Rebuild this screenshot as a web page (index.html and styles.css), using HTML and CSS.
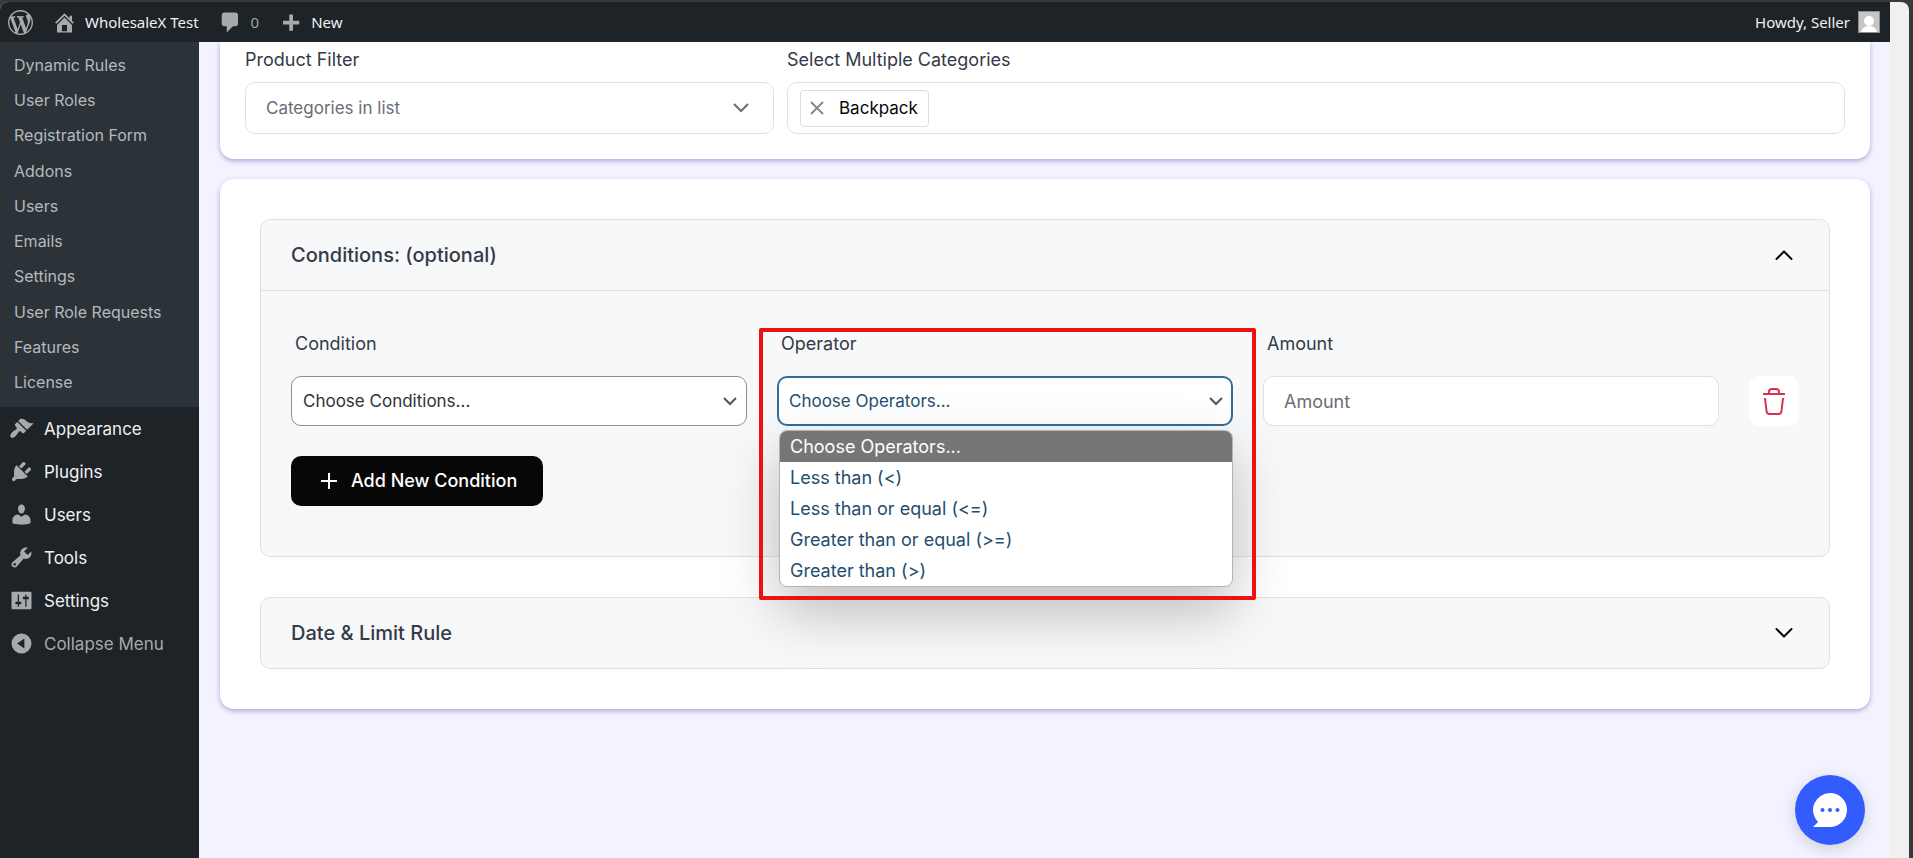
FILE: index.html
```html
<!DOCTYPE html>
<html lang="en">
<head>
    <meta charset="UTF-8">
    <meta name="viewport" content="width=device-width, initial-scale=1.0">
    <title>Dynamic Rules - WholesaleX Test</title>
    <link rel="stylesheet" href="styles.css">
</head>
<body>

<div class="window">
    <div class="page">

        <header class="admin-bar">
            <a class="bar-item" href="#" aria-label="About WordPress">
                <svg class="icon" viewBox="0 0 20 20"><path d="M20 10c0-5.51-4.49-10-10-10C4.48 0 0 4.49 0 10c0 5.52 4.48 10 10 10 5.51 0 10-4.48 10-10zM7.78 15.37L4.37 6.22c.55-.02 1.17-.08 1.17-.08.5-.06.44-1.13-.06-1.11 0 0-1.45.11-2.37.11-.18 0-.37 0-.58-.01C4.12 2.69 6.87 1.11 10 1.11c2.33 0 4.45.87 6.05 2.34-.68-.11-1.65.39-1.65 1.58 0 .74.45 1.36.9 2.1.35.61.55 1.36.55 2.46 0 1.49-1.4 5-1.4 5l-3.03-8.37c.54-.02.82-.17.82-.17.5-.05.44-1.25-.06-1.22 0 0-1.44.12-2.38.12-.87 0-2.33-.12-2.33-.12-.5-.03-.56 1.2-.06 1.22l.92.08 1.26 3.41zM17.41 10c.24-.64.74-1.87.43-4.25.7 1.29 1.05 2.71 1.05 4.25 0 3.29-1.73 6.24-4.4 7.78.97-2.59 1.94-5.2 2.92-7.78zM6.1 18.09C3.12 16.65 1.11 13.53 1.11 10c0-1.3.23-2.48.72-3.59C3.25 10.3 4.67 14.2 6.1 18.09zm4.03-6.63l2.58 6.98c-.86.29-1.76.45-2.71.45-.79 0-1.57-.11-2.29-.33.81-2.38 1.62-4.74 2.42-7.1z"/></svg>
            </a>
            <a class="bar-item" href="#">
                <svg class="icon" viewBox="0 0 20 20"><path fill-rule="evenodd" d="M16 8.5l1.53 1.53-1.06 1.06L10 4.6l-6.47 6.49-1.06-1.06L10 2.5l4 4v-2h2v4zm-6-2.46l6 5.99V18H4v-5.97zM12 17v-5H8v5h4z"/></svg>
                <span>WholesaleX Test</span>
            </a>
            <a class="bar-item muted" href="#">
                <svg class="icon" viewBox="0 0 20 20"><path d="M5 2h9c1.1 0 2 .9 2 2v7c0 1.1-.9 2-2 2h-2l-5 5v-5H5c-1.1 0-2-.9-2-2V4c0-1.1.9-2 2-2z"/></svg>
                <span>0</span>
            </a>
            <a class="bar-item" href="#">
                <svg class="icon" viewBox="0 0 20 20"><path d="M17 8.500v3h-5v5H9v-5H4v-3h5v-5h3v5h5z"/></svg>
                <span>New</span>
            </a>
            <a class="bar-item account" href="#">
                <span>Howdy, Seller</span>
                <svg class="avatar" viewBox="0 0 22 22"><rect width="22" height="22" fill="#c5c5c5"/><circle cx="11" cy="10" r="5" fill="#fff"/><path d="M3 21c1-4 4-6 8-6s7 2 8 6z" fill="#fff"/><rect x="0.500" y="0.500" width="21" height="21" fill="none" stroke="#8c8f94"/></svg>
            </a>
        </header>

        <div class="layout">
            <nav class="sidebar">
                <div class="submenu">
                    <a href="#">Dynamic Rules</a>
                    <a href="#">User Roles</a>
                    <a href="#">Registration Form</a>
                    <a href="#">Addons</a>
                    <a href="#">Users</a>
                    <a href="#">Emails</a>
                    <a href="#">Settings</a>
                    <a href="#">User Role Requests</a>
                    <a href="#">Features</a>
                    <a href="#">License</a>
                </div>
                <a class="menu-item" href="#">
                    <svg class="icon" viewBox="0 0 20 20"><path d="M14.48 11.06L7.41 3.99l1.5-1.5c.5-.56 2.3-.47 3.51.32 1.21.8 1.43 1.28 2.91 2.1 1.18.64 2.45 1.26 4.45.85zm-.71.71L6.7 4.7 4.93 6.47c-.39.39-.39 1.02 0 1.41l1.06 1.06c.39.39.39 1.03 0 1.42-.6.6-1.43 1.11-2.21 1.69-.35.26-.7.53-1.01.84C1.43 14.23.4 16.08 1.4 17.07c.99 1 2.84-.03 4.18-1.36.31-.31.58-.66.85-1.02.57-.78 1.08-1.61 1.69-2.21.39-.39 1.02-.39 1.41 0l1.06 1.06c.39.39 1.02.39 1.41 0z"/></svg>
                    Appearance
                </a>
                <a class="menu-item" href="#">
                    <svg class="icon" viewBox="0 0 20 20"><path d="M13.11 4.36L9.87 7.6 8 5.73l3.24-3.24c.35-.34 1.05-.2 1.56.32.52.51.66 1.21.31 1.55zm-8 1.77l.91-1.12 9.01 9.01-1.19.84c-.71.71-2.63 1.16-3.82 1.16H6.14L4.9 17.26c-.59.59-1.54.59-2.12 0-.59-.58-.59-1.53 0-2.12l1.24-1.24v-3.88c0-1.13.4-3.19 1.09-3.89zm7.26 3.97l3.24-3.24c.34-.35 1.04-.21 1.55.31.52.51.66 1.21.31 1.55l-3.24 3.25z"/></svg>
                    Plugins
                </a>
                <a class="menu-item" href="#">
                    <svg class="icon" viewBox="0 0 20 20"><path d="M10 9.25c-2.27 0-2.73-3.44-2.73-3.44C7 4.02 7.82 2 9.97 2c2.16 0 2.98 2.02 2.71 3.81 0 0-.41 3.44-2.68 3.44zm0 2.57L12.72 10c2.39 0 4.52 2.33 4.52 4.53v2.49s-3.65 1.13-7.24 1.13c-3.65 0-7.24-1.13-7.24-1.13v-2.49c0-2.25 1.94-4.48 4.47-4.48z"/></svg>
                    Users
                </a>
                <a class="menu-item" href="#">
                    <svg class="icon" viewBox="0 0 20 20"><path d="M16.68 9.77c-1.34 1.34-3.3 1.67-4.95.99l-5.41 6.52c-.99.99-2.59.99-3.58 0s-.99-2.59 0-3.57l6.52-5.42c-.68-1.65-.35-3.61.99-4.95 1.28-1.28 3.12-1.62 4.72-1.06l-2.89 2.89 2.82 2.82 2.86-2.87c.53 1.58.18 3.39-1.08 4.65zM3.81 16.21c.4.39 1.04.39 1.43 0 .4-.4.4-1.04 0-1.43-.39-.4-1.03-.4-1.43 0-.39.39-.39 1.03 0 1.43z"/></svg>
                    Tools
                </a>
                <a class="menu-item" href="#">
                    <svg class="icon" viewBox="0 0 20 20"><path fill-rule="evenodd" d="M18 16V4c0-.55-.45-1-1-1H3c-.55 0-1 .45-1 1v12c0 .55.45 1 1 1h14c.55 0 1-.45 1-1zM8 11h1c.55 0 1 .45 1 1s-.45 1-1 1H8v1.5c0 .28-.22.5-.5.5s-.5-.22-.5-.5V13H6c-.55 0-1-.45-1-1s.45-1 1-1h1V5.500c0-.28.22-.5.5-.5s.5.22.5.5V11zm5-2h-1c-.55 0-1-.45-1-1s.45-1 1-1h1V5.500c0-.28.22-.5.5-.5s.5.22.5.5V7h1c.55 0 1 .45 1 1s-.45 1-1 1h-1v5.500c0 .28-.22.5-.5.5s-.5-.22-.5-.5V9z"/></svg>
                    Settings
                </a>
                <button class="menu-item muted" type="button">
                    <svg class="icon" viewBox="0 0 20 20"><path fill-rule="evenodd" d="M10 2a8 8 0 1 0 0 16 8 8 0 0 0 0-16zM12.300 6v8L6.500 10z"/></svg>
                    Collapse Menu
                </button>
            </nav>

            <main class="content">
                <section class="card filter-card">
                    <div class="filter-field">
                        <label for="productFilter">Product Filter</label>
                        <div class="select-wrap">
                            <select class="filter-select" id="productFilter">
                                <option>Categories in list</option>
                            </select>
                            <svg class="chevron" viewBox="0 0 16 16"><path d="M1 4l7 7 7-7"/></svg>
                        </div>
                    </div>
                    <div class="filter-field">
                        <label for="categories">Select Multiple Categories</label>
                        <div class="tag-box">
                            <span class="tag">
                                <button type="button" aria-label="Remove Backpack">
                                    <svg viewBox="0 0 12 12"><path d="M0 0l12 12M12 0L0 12"/></svg>
                                </button>
                                Backpack
                            </span>
                            <input type="text" id="categories">
                        </div>
                    </div>
                </section>

                <section class="card rules-card">
                    <div class="accordion">
                        <button class="accordion-header" type="button" aria-expanded="true">
                            Conditions: (optional)
                            <svg viewBox="0 0 18 18"><path d="M1.500 13L9 5.500l7.500 7.500"/></svg>
                        </button>
                        <div class="accordion-body">
                            <div class="condition-row">
                                <div class="field">
                                    <label for="condition">Condition</label>
                                    <div class="select-wrap">
                                        <select id="condition">
                                            <option>Choose Conditions...</option>
                                        </select>
                                        <svg class="chevron" viewBox="0 0 16 16"><path d="M2 5l6 6 6-6"/></svg>
                                    </div>
                                </div>
                                <div class="field">
                                    <label for="operator">Operator</label>
                                    <div class="select-wrap">
                                        <select class="active" id="operator">
                                            <option>Choose Operators...</option>
                                        </select>
                                        <svg class="chevron" viewBox="0 0 16 16"><path d="M2 5l6 6 6-6"/></svg>
                                    </div>
                                    <ul class="options">
                                        <li class="selected">Choose Operators...</li>
                                        <li>Less than (&lt;)</li>
                                        <li>Less than or equal (&lt;=)</li>
                                        <li>Greater than or equal (&gt;=)</li>
                                        <li>Greater than (&gt;)</li>
                                    </ul>
                                    <div class="highlight"></div>
                                </div>
                                <div class="field">
                                    <label for="amount">Amount</label>
                                    <input type="text" id="amount" placeholder="Amount">
                                </div>
                                <button class="delete-btn" type="button" aria-label="Delete condition">
                                    <svg viewBox="0 0 24 28"><path d="M1 7h22M7 7V5q0-3 3-3h4q3 0 3 3v2M3 11l1.500 13q.3 3 3 3h9q2.700 0 3-3L21 11"/></svg>
                                </button>
                            </div>
                            <button class="add-btn" type="button">
                                <svg viewBox="0 0 18 18"><path d="M9 1v16M1 9h16"/></svg>
                                Add New Condition
                            </button>
                        </div>
                    </div>

                    <div class="accordion">
                        <button class="accordion-header" type="button" aria-expanded="false">
                            Date &amp; Limit Rule
                            <svg viewBox="0 0 18 18"><path d="M1.500 5L9 12.500 16.500 5"/></svg>
                        </button>
                    </div>
                </section>
            </main>
        </div>
    </div>
    <div class="scroll-track"></div>
</div>

<button class="chat-btn" type="button" aria-label="Open chat">
    <svg viewBox="0 0 34 34"><path d="M17 0a17 17 0 1 1 0 34H0l5-5A17 17 0 0 1 17 0z" fill="#fff"/><circle cx="9.500" cy="17" r="2"/><circle cx="17" cy="17" r="2"/><circle cx="24.500" cy="17" r="2"/></svg>
</button>

</body>
</html>
```
FILE: styles.css
```css
* {
    box-sizing: border-box;
}

body {
    margin: 0;
    background: #38393b;
    font-family: Inter, "Liberation Sans", sans-serif;
    font-size: 18px;
    line-height: 24px;
    color: #343a46;
}

a {
    text-decoration: none;
}

button,
input,
select {
    font: inherit;
    margin: 0;
}

button {
    cursor: pointer;
    border: none;
}

/* browser frame */
.window {
    display: flex;
    min-height: 100vh;
    padding: 2px 4px 0 0;
}

.page {
    flex: 1;
    display: flex;
    flex-direction: column;
    border-top-left-radius: 8px;
    overflow: hidden;
    background: #f3f3ff;
}

.scroll-track {
    width: 19px;
    background: #f0f0f0;
    border-top-right-radius: 8px;
}

/* admin bar */
.admin-bar {
    display: flex;
    align-items: center;
    gap: 19px;
    height: 40px;
    padding: 0 10px 0 8px;
    background: #1d2327;
    font-family: "Noto Sans", sans-serif;
    font-size: 15px;
}

.bar-item {
    display: flex;
    align-items: center;
    gap: 8px;
    color: #f0f0f1;
}

.bar-item.muted {
    color: #9ca2a7;
}

.account {
    margin-left: auto;
}

.avatar {
    width: 22px;
    height: 22px;
}

.icon {
    width: 25px;
    height: 25px;
    fill: #a7aaad;
}

.layout {
    flex: 1;
    display: flex;
}

/* sidebar */
.sidebar {
    width: 199px;
    background: #1d2327;
}

.submenu {
    display: flex;
    flex-direction: column;
    justify-content: space-between;
    min-height: 365px;
    padding: 6px 0 7px;
    background: #2c3338;
    font-size: 16px;
}

.submenu a {
    padding: 0 14px;
    line-height: 35px;
    color: #b4b9be;
}

.menu-item {
    display: flex;
    align-items: center;
    gap: 10px;
    width: 100%;
    height: 43px;
    padding: 0 9px;
    background: none;
    font-size: 17px;
    color: #f0f0f1;
}

.menu-item.muted {
    color: #a7aaad;
}

/* content cards */
.content {
    flex: 1;
    padding: 0 20px 20px 21px;
}

.card {
    background: #fff;
    border-radius: 14px;
    box-shadow: 0 2px 5px rgba(75, 50, 160, 0.4);
}

.filter-card {
    display: grid;
    grid-template-columns: 1fr 2fr;
    gap: 13px;
    margin-bottom: 20px;
    padding: 6px 25px 25px;
    border-radius: 0 0 14px 14px;
}

.filter-field {
    display: flex;
    flex-direction: column;
    gap: 10px;
}

.select-wrap {
    position: relative;
    display: flex;
}

.select-wrap select {
    width: 100%;
    height: 50px;
    padding: 0 11px;
    border: 1px solid #8c8f94;
    border-radius: 10px;
    background: #fff;
    font-size: 17px;
    color: #2c3338;
    appearance: none;
}

.select-wrap select.active {
    padding: 0 10px;
    border: 2px solid #2f6d99;
    color: #1f4e6e;
}

.select-wrap .filter-select {
    height: 52px;
    padding: 0 20px;
    border-color: #e0e0e3;
    color: #6c6c77;
}

.chevron {
    position: absolute;
    top: 50%;
    right: 9px;
    width: 16px;
    height: 16px;
    margin-top: -8px;
    fill: none;
    stroke: #50575e;
    stroke-width: 2;
    pointer-events: none;
}

.filter-select + .chevron {
    right: 25px;
    stroke: #6c6c77;
}

.tag-box {
    display: flex;
    align-items: center;
    gap: 8px;
    height: 52px;
    padding: 0 12px;
    border: 1px solid #e0e0e3;
    border-radius: 10px;
}

.tag {
    display: flex;
    align-items: center;
    gap: 16px;
    height: 37px;
    padding: 0 10px;
    border: 1px solid #dcdce0;
    border-radius: 4px;
    font-size: 17px;
    color: #070707;
}

.tag button {
    display: flex;
    padding: 0;
    background: none;
}

.tag svg {
    width: 12px;
    height: 12px;
    stroke: #8a8a8f;
    stroke-width: 2;
    overflow: visible;
}

.tag-box input {
    flex: 1;
    border: none;
    outline: none;
}

/* accordions */
.rules-card {
    display: flex;
    flex-direction: column;
    gap: 40px;
    padding: 40px;
}

.accordion {
    border: 1px solid #e0e1e5;
    border-radius: 10px;
    background: #f7f8fa;
}

.accordion-header {
    display: flex;
    align-items: center;
    justify-content: space-between;
    width: 100%;
    height: 70px;
    padding: 0 36px 0 30px;
    background: none;
    font-size: 20px;
    font-weight: 500;
    color: #343a46;
}

.accordion-header svg {
    width: 18px;
    height: 18px;
    fill: none;
    stroke: #070707;
    stroke-width: 2;
    stroke-linecap: round;
    stroke-linejoin: round;
}

.accordion-body {
    padding: 41px 30px 50px;
    border-top: 1px solid #e0e1e5;
}

.condition-row {
    display: grid;
    grid-template-columns: repeat(3, 1fr) 50px;
    gap: 30px;
    align-items: end;
    margin-bottom: 30px;
}

.field {
    position: relative;
    display: flex;
    flex-direction: column;
    gap: 20px;
}

.field label {
    padding-left: 4px;
}

.field > input {
    width: 100%;
    height: 50px;
    padding: 0 20px;
    border: 1px solid #e0e1e5;
    border-radius: 10px;
    background: #fff;
}

.field > input::placeholder {
    color: #6c6c77;
    opacity: 1;
}

/* open list under the operator select */
.options {
    position: absolute;
    top: 98px;
    left: 2px;
    right: 0;
    z-index: 2;
    margin: 0;
    padding: 0;
    list-style: none;
    overflow: hidden;
    border: 1px solid #b4b4b4;
    border-radius: 8px;
    background: #fff;
    box-shadow: 0 24px 56px rgba(0, 0, 0, 0.25);
    color: #1f4e6e;
}

.options li {
    padding: 0 10px;
    line-height: 31px;
}

.options .selected {
    background: #767676;
    color: #fff;
}

.highlight {
    position: absolute;
    top: -4px;
    right: -23px;
    bottom: -174px;
    left: -18px;
    z-index: 3;
    border: 4px solid #ee1111;
    border-radius: 2px;
    pointer-events: none;
}

.delete-btn {
    display: flex;
    align-items: center;
    justify-content: center;
    height: 50px;
    padding: 0;
    border-radius: 10px;
    background: #fff;
}

.delete-btn svg {
    width: 24px;
    height: 28px;
    fill: none;
    stroke: #d9304f;
    stroke-width: 2;
}

.add-btn {
    display: flex;
    align-items: center;
    gap: 13px;
    height: 50px;
    padding: 0 26px 0 29px;
    border-radius: 10px;
    background: #070707;
    color: #fff;
    font-weight: 500;
}

.add-btn svg {
    width: 18px;
    height: 18px;
    stroke: #fff;
    stroke-width: 2;
}

/* chat bubble */
.chat-btn {
    position: fixed;
    right: 48px;
    bottom: 13px;
    display: flex;
    align-items: center;
    justify-content: center;
    width: 70px;
    height: 70px;
    padding: 0;
    border-radius: 50%;
    background: #335cff;
    box-shadow: 0 4px 16px rgba(0, 0, 0, 0.15);
}

.chat-btn svg {
    width: 34px;
    height: 34px;
    fill: #335cff;
}
```
